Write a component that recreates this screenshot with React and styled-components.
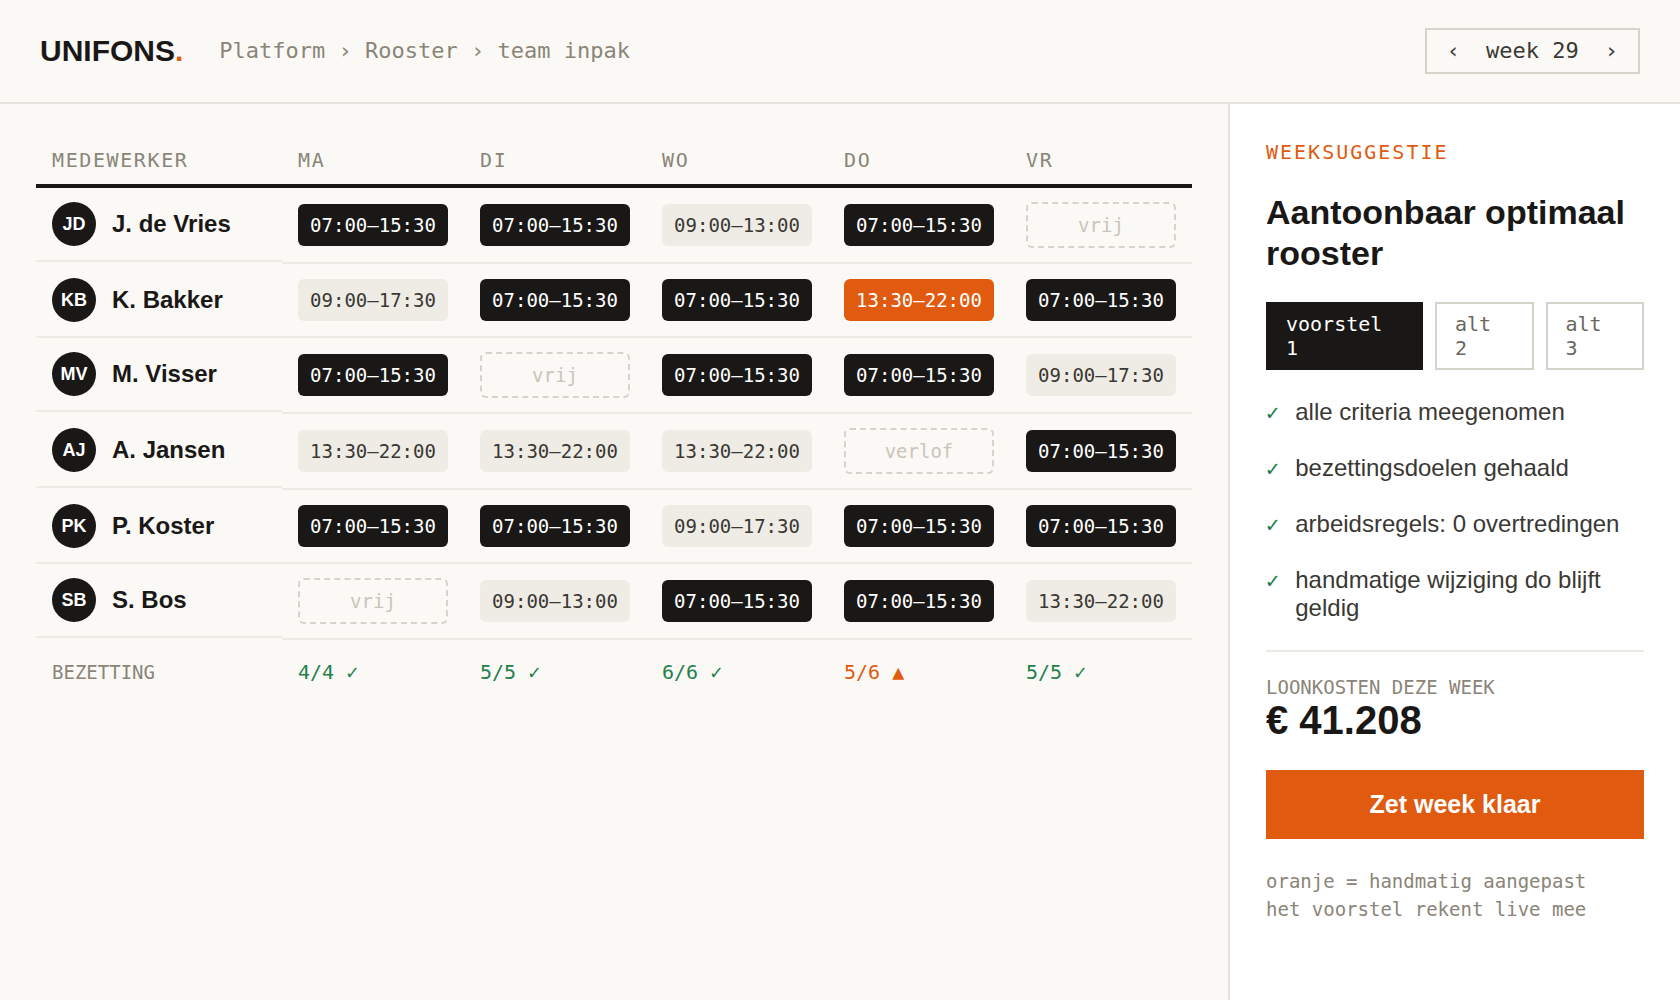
import React, { useState } from "react";
import styled, { createGlobalStyle, css } from "styled-components";

const ink = "#1a1816";
const paper = "#faf9f6";
const orange = "#e05a10";
const green = "#237f4c";
const muted = "#8a8578";
const soft = "#3a3833";
const line = "#e4e2dc";
const hairline = "#eceae3";
const frame = "#d6d3ca";
const sans = `"Liberation Sans", Arial, sans-serif`;
const mono = `"DejaVu Sans Mono", Menlo, monospace`;

const GlobalStyle = createGlobalStyle`
  *, *::before, *::after { box-sizing: border-box; }
  body { margin: 0; background: ${paper}; color: ${ink}; font-family: ${sans}; }
  button { font: inherit; color: inherit; cursor: pointer; }
`;

const Page = styled.div`
  min-height: 100vh;
  display: flex;
  flex-direction: column;
`;

const Header = styled.header`
  display: flex;
  align-items: center;
  gap: 36px;
  padding: 28px 40px;
  border-bottom: 2px solid ${line};
`;

const Logo = styled.div`
  font-size: 30px;
  line-height: 36px;
  font-weight: 700;
  span { color: ${orange}; }
`;

const Breadcrumb = styled.nav`
  font-family: ${mono};
  font-size: 22px;
  line-height: 26px;
  color: ${muted};
  a { color: inherit; text-decoration: none; }
`;

const WeekPicker = styled.div`
  margin-left: auto;
  display: flex;
  gap: 26px;
  padding: 8px 20px;
  border: 2px solid ${frame};
  font-family: ${mono};
  font-size: 22px;
  line-height: 26px;
  color: ${soft};
`;

const StepButton = styled.button`
  padding: 0;
  border: 0;
  background: none;
`;

const Body = styled.div`
  flex: 1;
  display: grid;
  grid-template-columns: minmax(0, 1fr) 452px;
`;

const Main = styled.main`
  padding: 36px;
`;

const Table = styled.table`
  width: 100%;
  border-collapse: separate;
  border-spacing: 0;
`;

const HeadCell = styled.th`
  width: ${(p) => (p.$day ? "182px" : "auto")};
  padding: 8px 16px 12px;
  border-bottom: 4px solid ${ink};
  font-family: ${mono};
  font-size: 20px;
  line-height: 24px;
  font-weight: 400;
  letter-spacing: 0.08em;
  text-align: left;
  color: ${muted};
`;

const NameCell = styled.th`
  display: flex;
  align-items: center;
  gap: 16px;
  padding: 14px 16px;
  border-bottom: 2px solid ${hairline};
  font-size: 24px;
  line-height: 28px;
  font-weight: 700;
  text-align: left;
`;

const Avatar = styled.span`
  width: 44px;
  height: 44px;
  flex: none;
  display: grid;
  place-items: center;
  border-radius: 50%;
  background: ${ink};
  color: #fff;
  font-size: 18px;
  line-height: 22px;
`;

const ShiftCell = styled.td`
  padding: 14px 16px;
  border-bottom: 2px solid ${hairline};
  vertical-align: middle;
`;

const shiftKinds = {
  early: css`background: ${ink}; color: #fff;`,
  light: css`background: #efece6; color: ${soft};`,
  manual: css`background: ${orange}; color: #fff;`,
  off: css`border: 2px dashed ${frame}; color: #c9c5ba;`,
};

const Shift = styled.div`
  padding: 10px 12px;
  border-radius: 6px;
  font-family: ${mono};
  font-size: 19px;
  line-height: 22px;
  text-align: center;
  white-space: nowrap;
  ${(p) => shiftKinds[p.$kind]}
`;

const FootLabel = styled.th`
  padding: 20px 16px;
  font-family: ${mono};
  font-size: 19px;
  line-height: 24px;
  font-weight: 400;
  text-align: left;
  color: ${muted};
`;

const FootCell = styled.td`
  padding: 20px 16px;
  font-family: ${mono};
  font-size: 20px;
  line-height: 24px;
  color: ${(p) => (p.$short ? orange : green)};
`;

const Sidebar = styled.aside`
  padding: 36px;
  border-left: 2px solid ${line};
  background: #fff;
`;

const Eyebrow = styled.div`
  font-family: ${mono};
  font-size: 20px;
  line-height: 24px;
  letter-spacing: 0.1em;
  color: ${orange};
`;

const Title = styled.h1`
  margin: 28px 0;
  font-size: 34px;
  line-height: 41px;
  font-weight: 700;
`;

const Options = styled.div`
  display: flex;
  gap: 12px;
`;

const Option = styled.button`
  padding: 8px 18px;
  border: 2px solid ${(p) => (p.$active ? ink : frame)};
  background: ${(p) => (p.$active ? ink : "transparent")};
  && {
    color: ${(p) => (p.$active ? "#fff" : "#6b675d")};
    font-family: ${mono};
    font-size: 20px;
    line-height: 24px;
    text-align: left;
  }
`;

const Checks = styled.ul`
  margin: 14px 0;
  padding: 0;
  list-style: none;
`;

const Check = styled.li`
  display: flex;
  align-items: baseline;
  gap: 16px;
  padding: 14px 0;
  font-size: 24px;
  line-height: 28px;
  color: ${soft};
  &::before {
    content: "✓";
    font-family: ${mono};
    font-size: 22px;
    line-height: 20px;
    color: ${green};
  }
`;

const Costs = styled.section`
  padding: 24px 0 28px;
  border-top: 2px solid ${hairline};
`;

const CostLabel = styled.div`
  font-family: ${mono};
  font-size: 19px;
  line-height: 22px;
  color: ${muted};
`;

const CostValue = styled.div`
  font-size: 40px;
  line-height: 44px;
  font-weight: 700;
`;

const Confirm = styled.button`
  width: 100%;
  padding: 20px;
  border: 0;
  background: ${orange};
  && {
    color: #fff;
    font-size: 25px;
    line-height: 29px;
    font-weight: 700;
  }
`;

const Note = styled.p`
  margin: 28px 0 0;
  font-family: ${mono};
  font-size: 19px;
  line-height: 28px;
  color: ${muted};
`;

const E = ["07:00–15:30", "early"];
const M = ["09:00–13:00", "light"];
const D = ["09:00–17:30", "light"];
const L = ["13:30–22:00", "light"];
const X = ["13:30–22:00", "manual"];
const FREE = ["vrij", "off"];
const LEAVE = ["verlof", "off"];

const days = ["MA", "DI", "WO", "DO", "VR"];

const staff = [
  { initials: "JD", name: "J. de Vries", shifts: [E, E, M, E, FREE] },
  { initials: "KB", name: "K. Bakker", shifts: [D, E, E, X, E] },
  { initials: "MV", name: "M. Visser", shifts: [E, FREE, E, E, D] },
  { initials: "AJ", name: "A. Jansen", shifts: [L, L, L, LEAVE, E] },
  { initials: "PK", name: "P. Koster", shifts: [E, E, D, E, E] },
  { initials: "SB", name: "S. Bos", shifts: [FREE, M, E, E, L] },
];

const coverage = [
  { text: "4/4 ✓" },
  { text: "5/5 ✓" },
  { text: "6/6 ✓" },
  { text: "5/6 ▲", short: true },
  { text: "5/5 ✓" },
];

const options = ["voorstel 1", "alt 2", "alt 3"];

const checks = [
  "alle criteria meegenomen",
  "bezettingsdoelen gehaald",
  "arbeidsregels: 0 overtredingen",
  "handmatige wijziging do blijft geldig",
];

export default function App() {
  const [week, setWeek] = useState(29);
  const [option, setOption] = useState(0);

  return (
    <>
      <GlobalStyle />
      <Page>
        <Header>
          <Logo>UNIFONS<span>.</span></Logo>
          <Breadcrumb>
            <a href="#platform">Platform</a> › <a href="#rooster">Rooster</a> › team inpak
          </Breadcrumb>
          <WeekPicker>
            <StepButton type="button" onClick={() => setWeek(week - 1)}>‹</StepButton>
            <span>week {week}</span>
            <StepButton type="button" onClick={() => setWeek(week + 1)}>›</StepButton>
          </WeekPicker>
        </Header>
        <Body>
          <Main>
            <Table>
              <thead>
                <tr>
                  <HeadCell scope="col">MEDEWERKER</HeadCell>
                  {days.map((d) => (
                    <HeadCell key={d} scope="col" $day>{d}</HeadCell>
                  ))}
                </tr>
              </thead>
              <tbody>
                {staff.map((s) => (
                  <tr key={s.initials}>
                    <NameCell scope="row">
                      <Avatar>{s.initials}</Avatar>
                      {s.name}
                    </NameCell>
                    {s.shifts.map(([text, kind], i) => (
                      <ShiftCell key={days[i]}>
                        <Shift $kind={kind}>{text}</Shift>
                      </ShiftCell>
                    ))}
                  </tr>
                ))}
              </tbody>
              <tfoot>
                <tr>
                  <FootLabel scope="row">BEZETTING</FootLabel>
                  {coverage.map((c, i) => (
                    <FootCell key={days[i]} $short={c.short}>{c.text}</FootCell>
                  ))}
                </tr>
              </tfoot>
            </Table>
          </Main>
          <Sidebar>
            <Eyebrow>WEEKSUGGESTIE</Eyebrow>
            <Title>Aantoonbaar optimaal rooster</Title>
            <Options>
              {options.map((o, i) => (
                <Option
                  key={o}
                  type="button"
                  $active={i === option}
                  aria-pressed={i === option}
                  onClick={() => setOption(i)}
                >
                  {o}
                </Option>
              ))}
            </Options>
            <Checks>
              {checks.map((c) => (
                <Check key={c}>{c}</Check>
              ))}
            </Checks>
            <Costs>
              <CostLabel>LOONKOSTEN DEZE WEEK</CostLabel>
              <CostValue>€ 41.208</CostValue>
            </Costs>
            <Confirm type="button">Zet week klaar</Confirm>
            <Note>
              oranje = handmatig aangepast
              <br />
              het voorstel rekent live mee
            </Note>
          </Sidebar>
        </Body>
      </Page>
    </>
  );
}
